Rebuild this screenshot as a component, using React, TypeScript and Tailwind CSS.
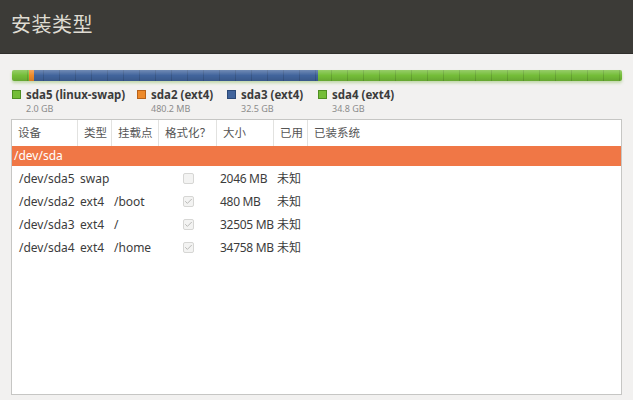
import { Check } from 'lucide-react';

const legend = [
  { name: 'sda5 (linux-swap)', size: '2.0 GB', color: 'bg-[#74bd38]', border: 'border-[#4f8f22]', w: 'w-[125px]' },
  { name: 'sda2 (ext4)', size: '480.2 MB', color: 'bg-[#ee8a2a]', border: 'border-[#b8621a]', w: 'w-[90px]' },
  { name: 'sda3 (ext4)', size: '32.5 GB', color: 'bg-[#41649c]', border: 'border-[#2c4a78]', w: 'w-[91px]' },
  { name: 'sda4 (ext4)', size: '34.8 GB', color: 'bg-[#74bd38]', border: 'border-[#4f8f22]', w: 'w-[100px]' },
];

const rows = [
  { dev: '/dev/sda5', type: 'swap', mount: '', fmt: false, size: '2046 MB', used: '未知' },
  { dev: '/dev/sda2', type: 'ext4', mount: '/boot', fmt: true, size: '480 MB', used: '未知' },
  { dev: '/dev/sda3', type: 'ext4', mount: '/', fmt: true, size: '32505 MB', used: '未知' },
  { dev: '/dev/sda4', type: 'ext4', mount: '/home', fmt: true, size: '34758 MB', used: '未知' },
];

const headers = ['设备', '类型', '挂载点', '格式化？', '大小', '已用', '已装系统'];

const cols = 'grid grid-cols-[66px_34px_47px_58px_57px_34px_1fr]';

function Checkbox({ checked }: { checked: boolean }) {
  return (
    <span className="flex h-[11px] w-[11px] items-center justify-center rounded-[2px] border border-[#d6d6d4] bg-[#f3f3f2]">
      {checked && <Check className="h-[9px] w-[9px] text-[#b5b5b3]" strokeWidth={2.5} />}
    </span>
  );
}

export default function App() {
  return (
    <div className="flex h-[400px] w-[633px] flex-col overflow-hidden bg-[#f2f1f0] font-['Noto_Sans','Noto_Sans_CJK_SC',sans-serif]">
      <div className="flex h-[54px] shrink-0 items-center border-b border-[#2f2e2b] bg-[#3c3b37] pl-[11px] pb-[4px]">
        <h1 className="text-[20px] leading-none tracking-[0.5px] text-[#dfdbd2]">安装类型</h1>
      </div>

      <div className="flex flex-1 flex-col pl-[11px] pr-[11px] pt-[16px] pb-[5px]">
        {/* partition bar */}
        <div className="relative ml-px flex h-[11px] overflow-hidden rounded-[2px] shadow-[0_2px_3px_rgba(100,170,40,0.35)]">
          <div className="w-[17px] bg-[#74bd38]" />
          <div className="w-[5px] bg-[#ee8a2a]" />
          <div className="w-[284px] bg-[#41649c]" />
          <div className="flex-1 bg-[#74bd38]" />
          <div className="absolute inset-0 bg-[repeating-linear-gradient(90deg,transparent_0,transparent_15px,rgba(0,0,0,0.13)_15px,rgba(0,0,0,0.13)_16px)]" />
          <div className="absolute inset-0 bg-[linear-gradient(180deg,rgba(255,255,255,0.25),rgba(255,255,255,0)_50%,rgba(0,0,0,0.12))]" />
        </div>

        {/* legend */}
        <div className="mt-[7px] ml-px flex">
          {legend.map(l => (
            <div key={l.name} className={`flex ${l.w} gap-[5px]`}>
              <span className={`mt-[2px] h-[9px] w-[9px] shrink-0 border ${l.border} ${l.color}`} />
              <div className="flex flex-col">
                <span className="text-[11.5px] font-bold leading-[14px] text-[#3c3c3c]">{l.name}</span>
                <span className="mt-[1px] text-[9px] leading-[11px] text-[#8c8c8c]">{l.size}</span>
              </div>
            </div>
          ))}
        </div>

        {/* table */}
        <div className="mt-[5px] flex-1 border border-[#c6c6c4] bg-white">
          <div className={`${cols} h-[26px] text-[11.5px] text-[#555]`}>
            {headers.map((h, i) => (
              <div
                key={h}
                className={`flex items-center pl-[6px] ${i < headers.length - 1 ? 'border-r border-[#e2e2e0]' : ''}`}
              >
                {h}
              </div>
            ))}
          </div>
          <div className="flex h-[20px] items-center bg-[#f07746] pl-[2px] text-[12px] text-white">/dev/sda</div>
          <div className="pt-px">
            {rows.map(r => (
              <div key={r.dev} className={`${cols} h-[23px] items-center text-[12px] text-[#3c3c3c]`}>
                <span className="pl-[7px]">{r.dev}</span>
                <span className="pl-[2px]">{r.type}</span>
                <span className="pl-[2px]">{r.mount}</span>
                <span className="flex justify-center pl-[1px]">
                  <Checkbox checked={r.fmt} />
                </span>
                <span className="pl-[3px] tracking-[-0.3px]">{r.size}</span>
                <span className="pl-[3px]">{r.used}</span>
                <span />
              </div>
            ))}
          </div>
        </div>
      </div>
    </div>
  );
}
